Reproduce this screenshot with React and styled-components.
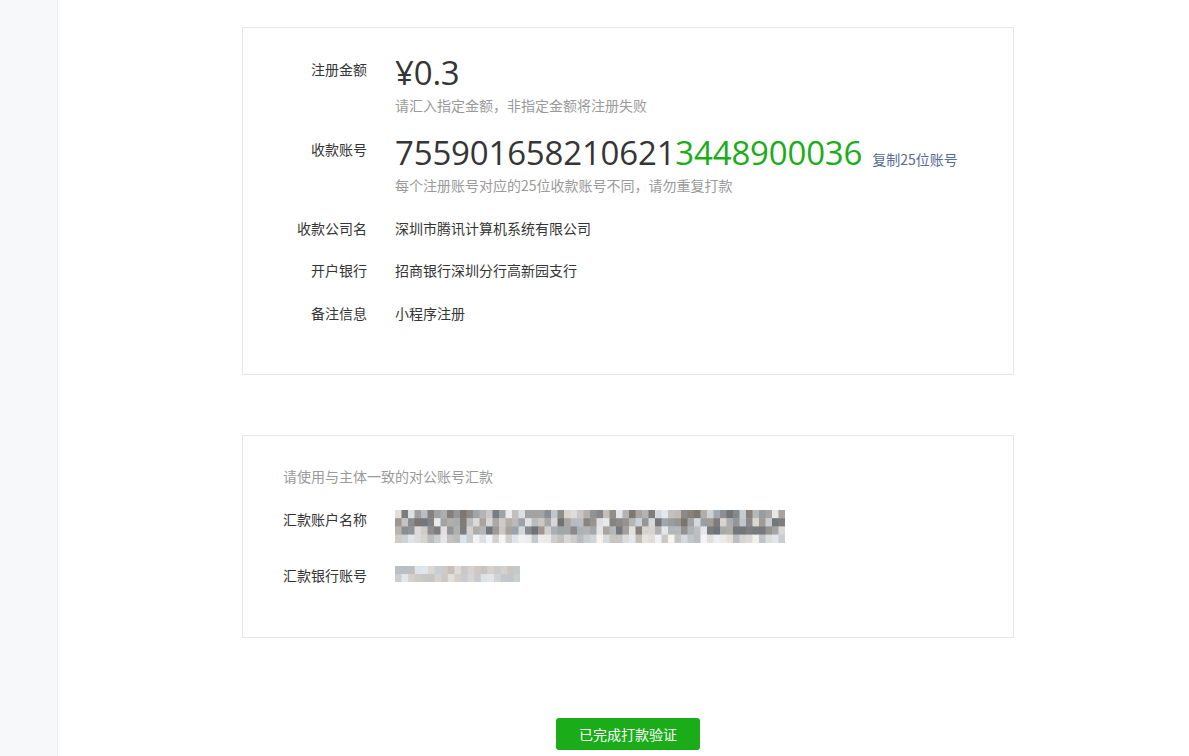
import React from "react";
import styled, { createGlobalStyle } from "styled-components";

const GlobalStyle = createGlobalStyle`
  html, body {
    margin: 0;
    padding: 0;
    background: #ffffff;
  }
  body {
    font-family: "Noto Sans CJK SC", "Liberation Sans", sans-serif;
    color: #353535;
    font-size: 14px;
  }
`;

const colors = {
  text: "#353535",
  hint: "#9a9a9a",
  green: "#1aad19",
  link: "#576b95",
  border: "#e7e7eb",
  side: "#f6f8f9",
};

const Page = styled.div`
  display: flex;
  min-height: 100vh;
`;

const Sidebar = styled.div`
  width: 57px;
  flex-shrink: 0;
  background: ${colors.side};
  border-right: 1px solid #e9ebee;
`;

const Main = styled.div`
  flex: 1;
  padding: 27px 0 0 9px;
  display: flex;
  justify-content: center;
`;

const Column = styled.div`
  width: 772px;
  display: flex;
  flex-direction: column;
  align-items: stretch;
`;

const Card = styled.div`
  border: 1px solid ${colors.border};
  background: #fff;
  padding: ${(p) => p.$pad};
  margin-top: ${(p) => p.$top || 0}px;
`;

const Row = styled.div`
  display: grid;
  grid-template-columns: 84px 1fr;
  column-gap: 28px;
  align-items: start;
  margin-top: ${(p) => p.$top || 0}px;
`;

const Label = styled.div`
  text-align: ${(p) => (p.$left ? "left" : "right")};
  line-height: 20px;
  padding-top: ${(p) => p.$offset || 0}px;
  color: ${colors.text};
  white-space: nowrap;
`;

const Value = styled.div`
  line-height: 20px;
  color: ${colors.text};
`;

const BigLine = styled.div`
  display: flex;
  align-items: baseline;
  height: 44px;
  line-height: 44px;
  white-space: nowrap;
`;

const Big = styled.span`
  font-family: "Open Sans", "Noto Sans CJK SC", sans-serif;
  font-size: 33px;
  line-height: 44px;
  color: ${colors.text};
  letter-spacing: -0.18px;
`;

const Green = styled.span`
  color: ${colors.green};
`;

const CopyLink = styled.a`
  color: ${colors.link};
  font-size: 14px;
  line-height: 20px;
  margin-left: 10px;
  text-decoration: none;
  cursor: pointer;
`;

const Hint = styled.div`
  color: ${colors.hint};
  line-height: 20px;
`;

const Title = styled.div`
  color: ${colors.hint};
  line-height: 20px;
`;

const Mosaic = styled.svg`
  display: block;
  margin-top: ${(p) => p.$top || 0}px;
`;

const ButtonWrap = styled.div`
  display: flex;
  justify-content: center;
  margin-top: 80px;
`;

const Button = styled.button`
  width: 144px;
  height: 32px;
  border: none;
  border-radius: 3px;
  background: ${colors.green};
  color: #fff;
  font-family: "Noto Sans CJK SC", sans-serif;
  font-size: 14px;
  cursor: pointer;
`;

// deterministic grey noise for the blurred fields
const rand = (seed) => {
  let s = seed;
  return () => {
    s = (s * 9301 + 49297) % 233280;
    return s / 233280;
  };
};

const Pixelated = ({ cols, rows, cw, ch, seed, light, top }) => {
  const r = rand(seed);
  const cells = [];
  for (let y = 0; y < rows; y++) {
    for (let x = 0; x < cols; x++) {
      const lastRow = y === rows - 1 && rows > 2;
      const min = light ? 190 : lastRow ? 185 : 115;
      const span = light ? 40 : lastRow ? 60 : 120;
      const g = Math.round(min + r() * span);
      const tint = Math.round((r() - 0.5) * 14);
      cells.push(
        <rect
          key={`${x}-${y}`}
          x={x * cw}
          y={y * ch}
          width={cw + 0.5}
          height={ch + 0.5}
          fill={`rgb(${g + tint},${g},${g - tint})`}
        />
      );
    }
  }
  return (
    <Mosaic $top={top} width={cols * cw} height={rows * ch} viewBox={`0 0 ${cols * cw} ${rows * ch}`}>
      {cells}
    </Mosaic>
  );
};

export default function App() {
  return (
    <>
      <GlobalStyle />
      <Page>
        <Sidebar />
        <Main>
          <Column>
            <Card $pad="23px 40px 51px 40px">
              <Row>
                <Label $offset={8}>注册金额</Label>
                <div>
                  <BigLine>
                    <Big>¥0.3</Big>
                  </BigLine>
                  <Hint>请汇入指定金额，非指定金额将注册失败</Hint>
                </div>
              </Row>
              <Row $top={16}>
                <Label $offset={8}>收款账号</Label>
                <div>
                  <BigLine>
                    <Big>
                      755901658210621<Green>3448900036</Green>
                    </Big>
                    <CopyLink>复制25位账号</CopyLink>
                  </BigLine>
                  <Hint>每个注册账号对应的25位收款账号不同，请勿重复打款</Hint>
                </div>
              </Row>
              <Row $top={23}>
                <Label>收款公司名</Label>
                <Value>深圳市腾讯计算机系统有限公司</Value>
              </Row>
              <Row $top={22}>
                <Label>开户银行</Label>
                <Value>招商银行深圳分行高新园支行</Value>
              </Row>
              <Row $top={23}>
                <Label>备注信息</Label>
                <Value>小程序注册</Value>
              </Row>
            </Card>

            <Card $top={60} $pad="30px 40px 52px 40px">
              <Title>请使用与主体一致的对公账号汇款</Title>
              <Row $top={23}>
                <Label $left>汇款账户名称</Label>
                <Pixelated cols={60} rows={4} cw={6.5} ch={8.2} seed={17} top={1} />
              </Row>
              <Row $top={22}>
                <Label $left>汇款银行账号</Label>
                <Pixelated cols={19} rows={2} cw={6.6} ch={8} seed={71} light top={1} />
              </Row>
            </Card>

            <ButtonWrap>
              <Button>已完成打款验证</Button>
            </ButtonWrap>
          </Column>
        </Main>
      </Page>
    </>
  );
}
